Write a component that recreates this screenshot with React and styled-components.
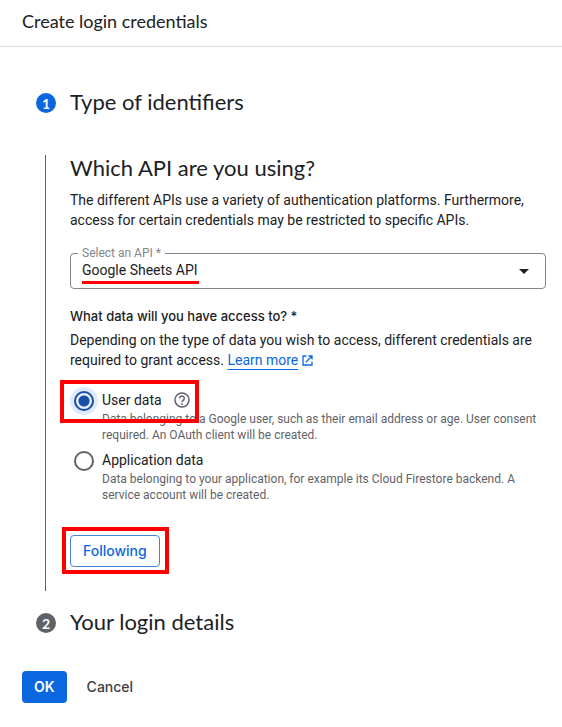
import { useState } from 'react';
import styled, { createGlobalStyle } from 'styled-components';

const display = `'Lato', 'Open Sans', sans-serif`;
const medium = `Inter, 'Open Sans', sans-serif`;

const GlobalStyle = createGlobalStyle`
	* {
		box-sizing: border-box;
		margin: 0;
		padding: 0;
	}

	body {
		background: #fff;
		color: #202124;
		font-family: Roboto, sans-serif;
		font-size: 14px;
		line-height: 20px;
	}
`;

const Header = styled.header`
	padding: 9px 22px 13px;
	border-bottom: 1px solid #dadce0;

	h1 {
		font: 400 18px/24px ${display};
	}
`;

const Steps = styled.main`
	padding: 40px 16px 0 36px;
`;

const StepHeader = styled.div`
	display: flex;
	align-items: center;
	gap: 14px;
	height: 32px;
`;

const StepNumber = styled.span`
	width: 20px;
	height: 20px;
	border-radius: 50%;
	background: ${(props) => (props.$active ? '#0b67e0' : '#5f6368')};
	color: #fff;
	font: 700 14px/22px ${display};
	text-align: center;
`;

const Title = styled.h2`
	padding-bottom: 2px;
	font: 400 22px/26px ${display};
`;

const StepBody = styled.form`
	margin: 36px 0 16px 9px;
	padding-left: 24px;
	padding-bottom: 24px;
	border-left: 1px solid #5f6368;
`;

const Text = styled.p`
	padding-top: ${(props) => (props.$top ? '7px' : '4px')};
`;

const SelectField = styled.fieldset`
	margin-top: 15px;
	padding: 0 7px 7px;
	border: 1px solid #80868b;
	border-radius: 4px;

	legend {
		padding: 0 4px;
		color: #80868b;
		font-size: 12px;
		line-height: 16px;
	}
`;

const SelectRow = styled.div`
	position: relative;
	display: grid;
	align-items: center;

	select,
	svg {
		grid-area: 1 / 1;
	}

	select {
		width: 100%;
		height: 20px;
		padding: 0 28px 2px 4px;
		border: 0;
		outline: 0;
		appearance: none;
		background: transparent;
		color: #202124;
		font: 400 14px/18px Roboto, sans-serif;
	}

	svg {
		justify-self: end;
		margin-right: 9px;
		pointer-events: none;
	}
`;

const Underline = styled.span`
	position: absolute;
	left: 4px;
	top: 20px;
	width: 117px;
	height: 3px;
	background: #f00;
`;

const Question = styled.h3`
	margin-top: 17px;
	font: 500 13px/20px ${medium};
`;

const LearnMore = styled.a`
	color: #0b67e0;
	text-decoration: underline 1px;
	text-underline-offset: 4px;
`;

const OpenMark = styled.svg`
	margin-left: 4px;
	color: #0b67e0;
	vertical-align: -1px;
`;

const Options = styled.div`
	display: grid;
	gap: 7px;
	margin-top: 20px;
`;

const Option = styled.div`
	position: relative;
	display: grid;
	grid-template: 20px auto / 28px 1fr;
	column-gap: 4px;

	input {
		appearance: none;
		width: 20px;
		height: 20px;
		margin: 1px 4px 0;
		border: 2px solid #5f6368;
		border-radius: 50%;
		outline: 0;
	}

	input:checked {
		border-color: #174ea6;
		background: radial-gradient(circle, #174ea6 5px, transparent 6px) #e3edfd;
		box-shadow: 0 0 0 4px #dfebfc;
	}

	p {
		grid-column: 2;
		padding-top: 1px;
		color: #5f6368;
		font-size: 12px;
		line-height: 16px;
	}
`;

const OptionLabel = styled.div`
	display: flex;
	align-items: center;
	gap: 12px;
`;

const Highlight = styled.span`
	position: absolute;
	inset: ${(props) => props.$inset};
	width: ${(props) => props.$width};
	border: 4px solid #f00;
	pointer-events: none;
`;

const NextRow = styled.div`
	position: relative;
	width: fit-content;
	margin-top: 32px;
`;

const Button = styled.button`
	display: block;
	height: 32px;
	padding: 0 12px;
	border: ${(props) => (props.$border ? `1px solid ${props.$border}` : 0)};
	border-radius: 4px;
	background: ${(props) => props.$fill || 'transparent'};
	color: ${(props) => props.$color};
	font: ${(props) => (props.$fill ? 600 : 500)} 14px/20px ${medium};
	cursor: pointer;
`;

const Actions = styled.footer`
	display: flex;
	gap: 8px;
	padding: 32px 22px 24px;
`;

const ExternalIcon = () => (
	<OpenMark width='11' height='11' viewBox='0 0 11 11' fill='none' stroke='currentColor' strokeWidth='1.3' aria-hidden='true'>
		<path d='M4.5 1H1v9h9V6.5M6.5 1H10v3.5M10 1 3.8 7.2' />
	</OpenMark>
);

const HelpIcon = () => (
	<svg width='16' height='16' viewBox='0 0 16 16' fill='none' stroke='#5f6368' strokeWidth='1.5' aria-hidden='true'>
		<circle cx='8' cy='8' r='7' />
		<path d='M5.7 6.4a2.3 2.3 0 1 1 3.7 1.8C8.5 8.9 8 9.2 8 10.2' />
		<path d='M8 11.3v1.6' />
	</svg>
);

const App = () => {
	const [kind, setKind] = useState('user');

	return (
		<>
			<GlobalStyle />
			<Header>
				<h1>Create login credentials</h1>
			</Header>
			<Steps>
				<StepHeader>
					<StepNumber $active>1</StepNumber>
					<Title>Type of identifiers</Title>
				</StepHeader>
				<StepBody onSubmit={(e) => e.preventDefault()}>
					<Title>Which API are you using?</Title>
					<Text $top>
						The different APIs use a variety of authentication platforms. Furthermore, access for certain
						credentials may be restricted to specific APIs.
					</Text>
					<SelectField>
						<legend>
							<label htmlFor='api'>Select an API *</label>
						</legend>
						<SelectRow>
							<select id='api'>
								<option>Google Sheets API</option>
							</select>
							<svg width='10' height='5' viewBox='0 0 10 5' aria-hidden='true'>
								<path d='M0 0h10L5 5z' fill='#202124' />
							</svg>
							<Underline />
						</SelectRow>
					</SelectField>
					<Question>What data will you have access to? *</Question>
					<Text>
						Depending on the type of data you wish to access, different credentials are required to grant
						access. <LearnMore href='#'>Learn more</LearnMore>
						<ExternalIcon />
					</Text>
					<Options>
						<Option>
							<input
								type='radio'
								id='user'
								name='kind'
								checked={kind === 'user'}
								onChange={() => setKind('user')}
							/>
							<OptionLabel>
								<label htmlFor='user'>User data</label>
								<HelpIcon />
							</OptionLabel>
							<p>
								Data belonging to a Google user, such as their email address or age. User consent
								required. An OAuth client will be created.
							</p>
							<Highlight $inset='-10px auto 20px -10px' $width='139px' />
						</Option>
						<Option>
							<input
								type='radio'
								id='application'
								name='kind'
								checked={kind === 'application'}
								onChange={() => setKind('application')}
							/>
							<OptionLabel>
								<label htmlFor='application'>Application data</label>
							</OptionLabel>
							<p>
								Data belonging to your application, for example its Cloud Firestore backend. A service
								account will be created.
							</p>
						</Option>
					</Options>
					<NextRow>
						<Button type='submit' $border='#4285d8' $color='#0b67e0'>
							Following
						</Button>
						<Highlight $inset='-8px -9px -7px -8px' />
					</NextRow>
				</StepBody>
				<StepHeader>
					<StepNumber>2</StepNumber>
					<Title>Your login details</Title>
				</StepHeader>
			</Steps>
			<Actions>
				<Button type='button' $fill='#0b67e0' $color='#fff'>
					OK
				</Button>
				<Button type='button' $color='#3c4043'>
					Cancel
				</Button>
			</Actions>
		</>
	);
};

export default App;
